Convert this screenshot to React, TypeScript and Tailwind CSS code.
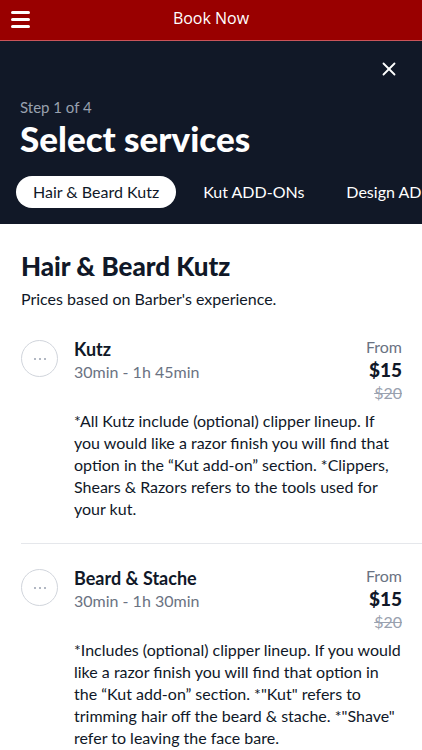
import React from 'react';
import { X } from 'lucide-react';

type Service = {
  name: string;
  duration: string;
  price: string;
  oldPrice: string;
  description: string;
};

const SERVICES: Service[] = [
  {
    name: 'Kutz',
    duration: '30min - 1h 45min',
    price: '$15',
    oldPrice: '$20',
    description:
      '*All Kutz include (optional) clipper lineup. If you would like a razor finish you will find that option in the \u201cKut add-on\u201d section. *Clippers, Shears & Razors refers to the tools used for your kut.',
  },
  {
    name: 'Beard & Stache',
    duration: '30min - 1h 30min',
    price: '$15',
    oldPrice: '$20',
    description:
      '*Includes (optional) clipper lineup. If you would like a razor finish you will find that option in the \u201cKut add-on\u201d section. *"Kut" refers to trimming hair off the beard & stache. *"Shave" refer to leaving the face bare.',
  },
];

const TABS = ['Hair & Beard Kutz', 'Kut ADD-ONs', 'Design ADD-ONs'];

const ServiceRow: React.FC<{ service: Service; first?: boolean; last?: boolean }> = ({ service, first, last }) => (
  <div className={`${first ? 'pt-[27px]' : 'pt-[22px]'} ${last ? '' : 'pb-[23px] border-b border-gray-200'}`}>
    <div className="flex items-start pr-5">
      <div className="mt-[3px] flex h-[37px] w-[37px] shrink-0 items-center justify-center rounded-full border border-gray-300">
        <div className="flex gap-[3px]">
          <span className="h-[2px] w-[2px] rounded-full bg-gray-400" />
          <span className="h-[2px] w-[2px] rounded-full bg-gray-400" />
          <span className="h-[2px] w-[2px] rounded-full bg-gray-400" />
        </div>
      </div>
      <div className="ml-4 flex-1">
        <div className="flex justify-between">
          <div>
            <div className="text-[18px] font-bold leading-[24px] text-gray-900">{service.name}</div>
            <div className="text-[16px] leading-[22px] text-gray-500">{service.duration}</div>
          </div>
          <div className="-mt-px flex flex-col items-end">
            <div className="text-[16px] leading-[22px] text-gray-500">From</div>
            <div className="text-[19px] font-black leading-[24px] text-gray-900">{service.price}</div>
            <div className="text-[16px] leading-[22px] text-gray-400 line-through">{service.oldPrice}</div>
          </div>
        </div>
        <p className="mt-[6px] text-[16px] leading-[22px] text-gray-900">{service.description}</p>
      </div>
    </div>
  </div>
);

export default function App() {
  return (
    <div className="min-h-[750px] bg-white" style={{ fontFamily: 'Lato, "Noto Sans", sans-serif' }}>
      <header className="relative flex h-[41px] items-center justify-center border-b border-[#c9545a] bg-[#990000]">
        <button type="button" className="absolute left-[11px] top-[11px] flex flex-col gap-[4px]">
          <span className="h-[3px] w-[19px] rounded-sm bg-white" />
          <span className="h-[3px] w-[19px] rounded-sm bg-white" />
          <span className="h-[3px] w-[19px] rounded-sm bg-white" />
        </button>
        <span className="-mt-[4px] text-[16px] text-white" style={{ fontFamily: '"Open Sans", sans-serif' }}>Book Now</span>
      </header>

      <section className="bg-[#111827] pb-4">
        <div className="flex justify-end pr-[22px] pt-[17px]">
          <X className="h-[22px] w-[22px] text-white" strokeWidth={2} />
        </div>
        <div className="px-5 pt-[16px]">
          <div className="text-[15px] leading-[22px] text-gray-400">Step 1 of 4</div>
          <h1 className="text-[35px] font-black leading-[40px] text-white">Select services</h1>
        </div>
        <nav className="mt-[18px] flex overflow-hidden whitespace-nowrap pl-4">
          {TABS.map((tab, i) => (
            <span
              key={tab}
              className={
                i === 0
                  ? 'rounded-full bg-white px-[17px] py-[5px] text-[16px] leading-[22px] text-gray-900'
                  : i === 1
                    ? 'ml-[5px] px-[22px] py-[5px] text-[16px] leading-[22px] text-white'
                    : 'px-[20px] py-[5px] text-[16px] leading-[22px] text-white'
              }
            >
              {tab}
            </span>
          ))}
        </nav>
      </section>

      <main className="pl-[21px] pt-[26px]">
        <h2 className="text-[26px] font-black leading-[32px] text-gray-900">Hair &amp; Beard Kutz</h2>
        <p className="mt-[6px] text-[16px] leading-[22px] text-gray-900">Prices based on Barber's experience.</p>
        {SERVICES.map((s, i) => (
          <ServiceRow key={s.name} service={s} first={i === 0} last={i === SERVICES.length - 1} />
        ))}
      </main>
    </div>
  );
}
